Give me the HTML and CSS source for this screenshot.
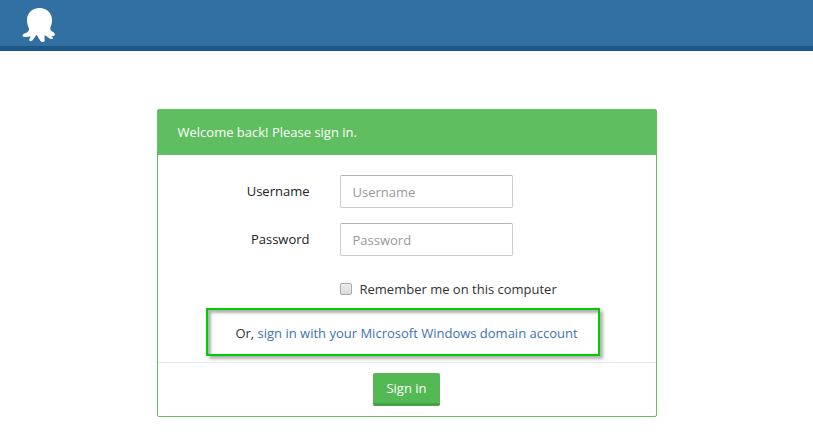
FILE: index.html
```html
<!DOCTYPE html>
<html lang="en">
<head>
<meta charset="utf-8">
<title>Sign in</title>
<link rel="stylesheet" href="styles.css">
</head>
<body>
<header class="topbar">
  <svg class="logo" viewBox="0 0 34 36" role="img" aria-label="Octopus">
    <path fill="#fff" d="M17.500 1C10 1 5 6 5 13C5 16.500 5.800 18.500 6.800 21C7.500 24 5.500 25.500 3 26.300C.3 27 0 29.500 1.500 29.700C4 30 6 30 8.300 29.200C8.800 30 8 31 7.300 32.300C6.800 34.400 9 34.700 10.300 33.400C12.200 31.500 13.200 29.500 14.300 28C15.300 28 15.500 29 16.200 30.500L18.500 34C19.600 35.500 22.600 35.300 22.700 33.500C22.500 31 22.300 29.500 22.600 28.300C24 28.700 25.500 30 27.800 31.500C29.800 32.600 31.800 32 30.500 30.300L29.300 29.200C30.500 29.200 31.300 29.200 32.200 28.700C33.800 27.500 32.500 25.800 31 25C28.500 23.700 28 22.500 28.400 20.500C29.500 18 30 16 30 13C30 6 25 1 17.500 1Z"/>
  </svg>
</header>
<main>
  <form class="panel">
    <h1 class="panel-title">Welcome back! Please sign in.</h1>
    <div class="fields">
      <div class="field">
        <label class="field-label" for="username">Username</label>
        <input class="textbox" id="username" type="text" placeholder="Username">
      </div>
      <div class="field">
        <label class="field-label" for="password">Password</label>
        <input class="textbox" id="password" type="password" placeholder="Password">
      </div>
      <div class="remember">
        <input class="checkbox" id="remember" type="checkbox">
        <label for="remember">Remember me on this computer</label>
      </div>
    </div>
    <p class="domain">Or, <a href="#domain">sign in with your Microsoft Windows domain account</a></p>
    <div class="actions">
      <button class="submit" type="submit">Sign in</button>
    </div>
  </form>
</main>
</body>
</html>
```

FILE: styles.css
```css
* {
  box-sizing: border-box;
}

body {
  margin: 0;
  background: #fff;
  color: #333;
  font-family: "Segoe UI", "Open Sans", "Noto Sans", sans-serif;
  font-size: 13px;
  line-height: 20px;
}

.topbar {
  height: 51px;
  padding: 7px 22px;
  background: #326fa3;
  border-bottom: 5px solid #1f5786;
}

.logo {
  display: block;
  width: 34px;
  height: 36px;
}

.panel {
  max-width: 500px;
  margin: 58px auto 26px;
  border: 1px solid #5fbe5f;
  border-radius: 2px;
}

.panel-title {
  margin: 0;
  padding: 12px 20px 13px;
  background: #5fbe5f;
  color: #fff;
  font-size: 13px;
  font-weight: 500;
  line-height: 20px;
}

.fields {
  padding: 20px 20px 9px;
}

.field {
  display: grid;
  grid-template-columns: 132px 173px;
  column-gap: 30px;
  margin-bottom: 15px;
}

.field-label {
  padding-top: 6px;
  color: #222;
  font-weight: 500;
  text-align: right;
}

.textbox {
  width: 100%;
  height: 33px;
  padding: 6px 12px;
  border: 1px solid #ccc;
  border-top-color: #b5b5b5;
  border-radius: 2px;
  background: #fff;
  color: #333;
  font: inherit;
}

.textbox::placeholder {
  color: #999;
}

.remember {
  display: flex;
  align-items: center;
  gap: 8px;
  margin: 23px 0 0 162px;
}

.checkbox {
  appearance: none;
  width: 12px;
  height: 12px;
  margin: 0;
  border: 1px solid #a9a9a9;
  border-radius: 2px;
  background: linear-gradient(#eee, #d9d9d9);
}

.checkbox:checked {
  background: #326fa3;
}

.domain {
  margin: 0 56px 6px 48px;
  padding: 13px 0 11px 8px;
  border: 2px solid #0c0;
  box-shadow: 3px 3px 3px rgba(0, 0, 0, 0.3), inset 3px 3px 3px rgba(0, 0, 0, 0.3);
  text-align: center;
}

.domain a {
  color: #3b73af;
  text-decoration: none;
}

.actions {
  padding: 10px;
  border-top: 1px solid #e8e8e8;
  text-align: center;
}

.submit {
  display: block;
  height: 33px;
  margin: 0 auto;
  padding: 0 13px;
  border: 0;
  border-bottom: 3px solid #45a245;
  border-radius: 2px;
  background: #54b954;
  color: #fff;
  font: inherit;
  font-weight: 500;
}
```
